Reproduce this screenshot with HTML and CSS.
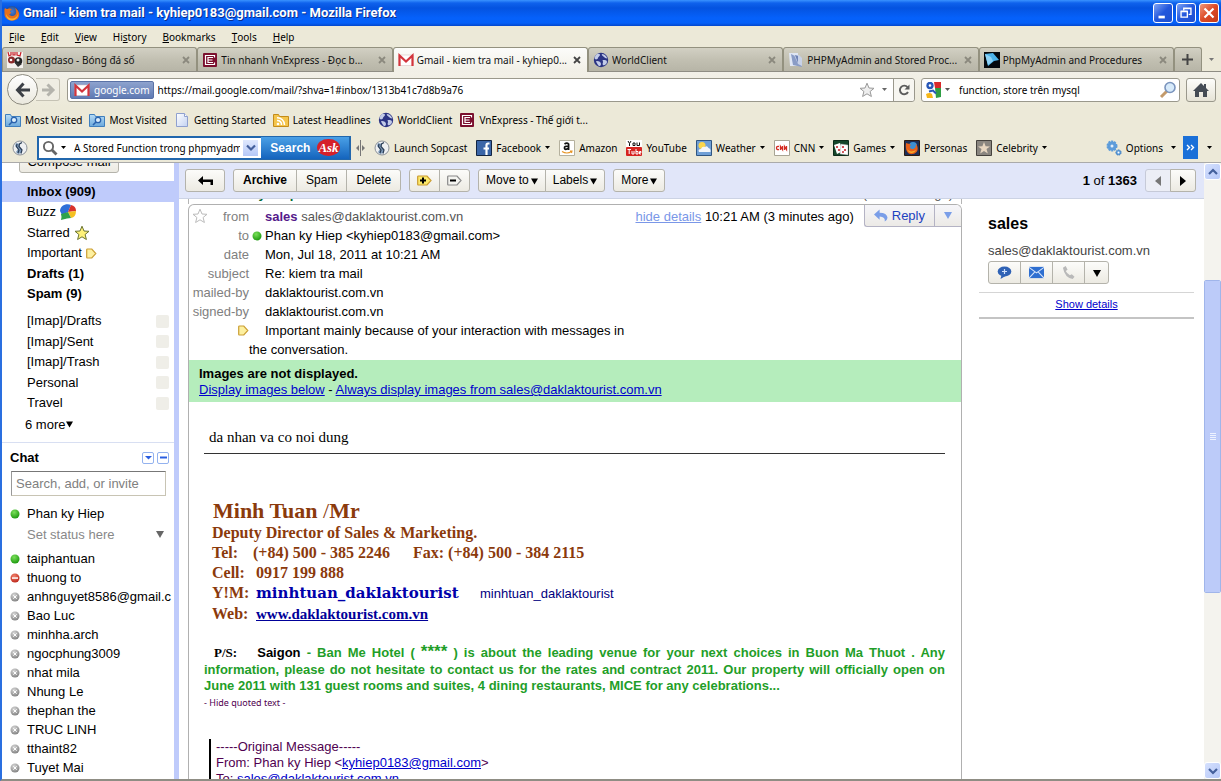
FILE: index.html
```html
<!DOCTYPE html>
<html lang="en">
<head>
<meta charset="utf-8">
<title>Gmail - kiem tra mail</title>
<link rel="stylesheet" href="styles.css">
</head>
<body>
<svg class="defs" aria-hidden="true">
  <defs>
    <linearGradient id="folder" x1="0" y1="0" x2="0" y2="1"><stop offset="0" stop-color="#b8dcf6"/><stop offset="1" stop-color="#6aa8dc"/></linearGradient>
    <linearGradient id="page" x1="0" y1="0" x2="1" y2="1"><stop offset="0" stop-color="#fff"/><stop offset="1" stop-color="#c3d2f2"/></linearGradient>
    <radialGradient id="fox" cx=".5" cy=".4" r=".6"><stop offset="0" stop-color="#4a7fd0"/><stop offset="1" stop-color="#15397e"/></radialGradient>
    <radialGradient id="on" cx=".4" cy=".3" r=".7"><stop offset="0" stop-color="#7be05a"/><stop offset="1" stop-color="#1e9a10"/></radialGradient>
    <radialGradient id="busy" cx=".4" cy=".3" r=".7"><stop offset="0" stop-color="#f0806a"/><stop offset="1" stop-color="#bf2a1e"/></radialGradient>
    <radialGradient id="off" cx=".4" cy=".3" r=".7"><stop offset="0" stop-color="#d8d8d8"/><stop offset="1" stop-color="#858585"/></radialGradient>
  </defs>
  <symbol id="i-firefox" viewBox="0 0 16 16"><circle cx="8" cy="8" r="7" fill="url(#fox)"/><path d="M1 3c1 1 2 1 3 1 2-1 3 0 4 1-2 0-2 1-2 2 2 0 1 2-1 2 1 2 4 3 6 1 2-2 1-5 0-7 3 2 5 5 4 8-1 4-5 5-8 4.500C3 15 0 12 .5 8 .5 6 0 5 1 3z" fill="#e8701a"/><path d="M2 9c1 3 4 5 7 4.500 3-.5 5-3 5-5 .5 4-3 7-6 7-4 0-6-3-6-6.500z" fill="#f9b233"/></symbol>
  <symbol id="i-ball" viewBox="0 0 16 16"><path fill="#f6f2ee" d="M0 0h16v16H0z"/><path d="M1 0l1 4 2-1V0M6 0v3h2V0M10 0v3l3 1 1-4" fill="none" stroke="#c8202a" stroke-width="1.200"/><circle cx="4.500" cy="8" r="3.500" fill="#8c2a2a"/><circle cx="11.500" cy="9" r="3.800" fill="#222"/><path d="M7 10l4 5 4-3" fill="#333"/><circle cx="11" cy="8" r="1.500" fill="#eee"/><circle cx="4" cy="8" r="1.300" fill="#fff"/></symbol>
  <symbol id="i-vne" viewBox="0 0 16 16"><rect x="1" y="1" width="14" height="14" rx="1" fill="#7b0f2e"/><path d="M12.500 5.500v-2h-9v9h9v-2M6 5.500h5M6 8h4.500M6 10.500h5M6 5v6" fill="none" stroke="#fff" stroke-width="1.200"/></symbol>
  <symbol id="i-gmail" viewBox="0 0 16 16"><path d="M1 3h14v10.500H1z" fill="#fff" stroke="#d9c4c4" stroke-width=".6"/><path d="M1.500 14V3.500L8 9.500l6.500-6V14" fill="none" stroke="#d3343c" stroke-width="2.200"/></symbol>
  <symbol id="i-globe" viewBox="0 0 16 16"><circle cx="8" cy="8" r="7.200" fill="#2b3484"/><path d="M3 3c2-2 4-1 4 0S5 5 5 6 3 8 2 7s0-3 1-4zM9 2c3 0 5 3 5 4s-2 0-3-1-3-2-2-3zM4 9c2 0 4 1 4 3s-2 3-3 1-3-4-1-4zM10 8c2 0 4 0 4 2s-3 4-4 3 0-2 0-3-1-2 0-2z" fill="#c2cbe8"/></symbol>
  <symbol id="i-doc2" viewBox="0 0 16 16"><path d="M1 1h9v13H2z" fill="#dfe6f4"/><path d="M3 2l2 11 9 2-3-9z" fill="#8a9cc6"/><path d="M6 3l4 9 4 2V6l-3-3z" fill="#c8d2e8"/><path d="M7 3l3 8V4z" fill="#6f83b6"/></symbol>
  <symbol id="i-fin" viewBox="0 0 16 16"><path fill="#05080d" d="M0 0h16v16H0z"/><path d="M1 2l8-1 6 7-5 1-6 5z" fill="#4db3ea"/><path d="M1 2l6 3 2 4-5 4z" fill="#8fd2f6"/></symbol>
  <symbol id="i-folder" viewBox="0 0 16 16"><path d="M.5 2.500h5l1 2h9v10H.5z" fill="url(#folder)" stroke="#3f7fbe"/><circle cx="9" cy="8" r="2.700" fill="#dceefb" stroke="#2a62ad" stroke-width="1.300"/><path d="M7 10l-3 3" stroke="#2a62ad" stroke-width="1.600"/></symbol>
  <symbol id="i-page" viewBox="0 0 16 16"><path d="M2.500 1.500h8l3 3v10h-11z" fill="url(#page)" stroke="#8fa0cf"/><path d="M10.500 1.500v3h3" fill="#fff" stroke="#8fa0cf"/></symbol>
  <symbol id="i-rssf" viewBox="0 0 16 16"><path d="M.5 2.500h5l1 2h9v10H.5z" fill="#f4c54c" stroke="#c48c1a"/><circle cx="5" cy="12" r="1.300" fill="#fff"/><path d="M4 8.500a4 4 0 0 1 4.500 4.500M4 5.800A7 7 0 0 1 11.500 13" fill="none" stroke="#fff" stroke-width="1.500"/></symbol>
  <symbol id="i-sop" viewBox="0 0 16 16"><circle cx="8" cy="8" r="7" fill="#eef0f2" stroke="#8b9198"/><path d="M4 3l4 1-1 3 3 3-1 3-3 1-2-2 2-3-3-3z" fill="#7f9cbc"/><path d="M10 2.500L7.500 4 7 6.500l3 3.500-1 3.500M5 4l-.5 2.500L7 10l-1 3" fill="none" stroke="#2a3d55" stroke-width="1.200"/></symbol>
  <symbol id="i-fb" viewBox="0 0 16 16"><path d="M.5.5h15v15H.5z" fill="#3b66a8" stroke="#132542"/><path d="M13.500 3.500H12Q10.500 3.500 10.500 5.200V15M7.500 8.500h5.500" fill="none" stroke="#fff" stroke-width="2.200"/></symbol>
  <symbol id="i-amz" viewBox="0 0 16 16"><path d="M.5.5h15v15H.5z" fill="#fff" stroke="#b5b19e"/><path d="M5.500 4Q8 2.200 9.600 4v6M9.500 6Q5 6 5.500 8.300T9.500 8" fill="none" stroke="#111" stroke-width="1.700"/><path d="M3 11.500q5 3 9.500 0M11 11l2 0-.5 2" fill="none" stroke="#e79524" stroke-width="1.100"/></symbol>
  <symbol id="i-yt" viewBox="0 0 16 16"><path fill="#fff" d="M0 0h16v7H0z"/><rect y="7" width="16" height="9" rx="1" fill="#d62320"/><path d="M2 1l1.500 2.500L5 1M3.500 3.500V6M7 3h2v2.500H7zM11 2.500V5.500h2.500v-3" fill="none" stroke="#111"/><path d="M1.500 9.500H5M3.200 9.500V14M6 11v3h2v-3M10 9v5h2v-2.500h-2M15 14h-1.500v-2.500H15v1.200h-1.500" fill="none" stroke="#fff"/></symbol>
  <symbol id="i-wx" viewBox="0 0 16 16"><path d="M.5.5h15v15H.5z" fill="#6f9fd6" stroke="#2f5582"/><circle cx="6" cy="5.500" r="3.500" fill="#fbd64c"/><path d="M3 12q-1.500-3 2-3 1-3 4-2 2-2 3.500 1 2.500.5 2 4z" fill="#f3f6fa"/></symbol>
  <symbol id="i-cnn" viewBox="0 0 16 16"><path d="M.5.5h15v15H.5z" fill="#fff" stroke="#a8a494"/><path d="M5 6.500q-2.500-.5-2.500 1.500T5 9.500M6.500 10V6.500L8.500 9.500V6M10.500 10V6.500L12.500 9.500V6" fill="none" stroke="#d42a20" stroke-width="1.300"/></symbol>
  <symbol id="i-games" viewBox="0 0 16 16"><path d="M.5.5h15v15H.5z" fill="#15462a" stroke="#0b2a18"/><path d="M1 5l6-2 3 8-6 3z" fill="#fff"/><path d="M8 4l7 1v10l-8-1z" fill="#fff" stroke="#999" stroke-width=".4"/><circle cx="4" cy="7" r="1.100" fill="#c1272d"/><circle cx="6" cy="10" r="1.100" fill="#c1272d"/><circle cx="10" cy="7" r="1.100" fill="#c1272d"/><circle cx="12" cy="10" r="1.100" fill="#c1272d"/><circle cx="10" cy="12" r="1" fill="#c1272d"/></symbol>
  <symbol id="i-pers" viewBox="0 0 16 16"><path d="M.5.5h15v15H.5z" fill="#1c2e57" stroke="#2b1a12"/><circle cx="9" cy="6" r="4" fill="#3d8fd2"/><path d="M2 3c2 1 3 0 5 2-2 1-1 4 1 4 3 0 4-2 4-5 3 4 2 9-3 10S1 11 2 3z" fill="#e7601a"/><path d="M3 9c2 3 6 3 9 1-1 3-7 5-9-1z" fill="#f7b02c"/></symbol>
  <symbol id="i-celeb" viewBox="0 0 16 16"><path d="M.5.5h15v15H.5z" fill="#8a8680" stroke="#45423e"/><path d="M8 2l1.600 4.200 4.400.2-3.500 2.700 1.300 4.400L8 11l-3.800 2.500 1.300-4.400L2 6.400l4.400-.2z" fill="#e7d6c0"/></symbol>
  <symbol id="i-gears" viewBox="0 0 16 16"><circle cx="6" cy="6" r="4.600" fill="#5d9cda" stroke="#5d9cda" stroke-width="1.800" stroke-dasharray="2 .9"/><circle cx="6" cy="6" r="4" fill="#5d9cda"/><circle cx="6" cy="6" r="1.500" fill="#e2eefa"/><circle cx="12.500" cy="12.500" r="2.600" fill="#5d9cda" stroke="#3c78b8" stroke-dasharray="1.500 .8"/><circle cx="12.500" cy="12.500" r="1" fill="#fff"/></symbol>
  <symbol id="i-star" viewBox="0 0 16 16"><path d="M8 1.200l2 4.800 5 .3-3.900 3.200 1.300 5L8 11.800l-4.400 2.700 1.300-5L1 6.300 6 6z"/></symbol>
  <symbol id="i-tag" viewBox="0 0 11 11"><path d="M1.500 1h4.300l4 4.500-4 4.500H1.500q-.8 0-.8-.8V1.800q0-.8.8-.8z" fill="#fdf0a0" stroke="#cb9f34" stroke-width="1.200"/></symbol>
  <symbol id="i-on" viewBox="0 0 10 10"><circle cx="5" cy="5" r="4.500" fill="url(#on)"/></symbol>
  <symbol id="i-busy" viewBox="0 0 10 10"><circle cx="5" cy="5" r="4.500" fill="url(#busy)"/><path d="M2 4.300h6v1.500H2z" fill="#fff"/></symbol>
  <symbol id="i-off" viewBox="0 0 10 10"><circle cx="5" cy="5" r="4.500" fill="url(#off)"/><path d="M3.300 3.300l3.400 3.400M6.700 3.300L3.300 6.700" stroke="#fff"/></symbol>
  <symbol id="i-x" viewBox="0 0 8 8"><path d="M1 1l6 6M7 1L1 7" stroke="currentColor" stroke-width="1.800"/></symbol>
  <symbol id="i-down" viewBox="0 0 8 8"><path d="M0 1h8L4 8z" fill="currentColor"/></symbol>
  <symbol id="i-caret" viewBox="0 0 5 3"><path d="M0 0h5L2.500 3z" fill="currentColor"/></symbol>
</svg>

<header class="chrome">
  <div class="titlebar">
    <svg class="i16"><use href="#i-firefox"/></svg>
    <h1>Gmail - kiem tra mail - kyhiep0183@gmail.com - Mozilla Firefox</h1>
    <button class="win" aria-label="Minimize"><svg viewBox="0 0 20 20"><path d="M5 13h7v3H5z" fill="#fff"/></svg></button>
    <button class="win" aria-label="Restore"><svg viewBox="0 0 20 20"><path d="M7.500 7V4.500h8v7H13M4.500 8.500h7v6h-7zM4 8h8M7 5h9" fill="none" stroke="#fff" stroke-width="1.500"/></svg></button>
    <button class="win close" aria-label="Close"><svg viewBox="0 0 20 20"><path d="M5 5l10 10M15 5L5 15" stroke="#fff" stroke-width="2.400"/></svg></button>
  </div>

  <nav class="menubar">
    <button><u>F</u>ile</button><button><u>E</u>dit</button><button><u>V</u>iew</button><button>Hi<u>s</u>tory</button><button><u>B</u>ookmarks</button><button><u>T</u>ools</button><button><u>H</u>elp</button>
  </nav>

  <div class="tabs">
    <div class="tab"><svg class="i16"><use href="#i-ball"/></svg><span>Bongdaso - Bóng đá số</span><button aria-label="Close tab"><svg class="i8"><use href="#i-x"/></svg></button></div>
    <div class="tab"><svg class="i16"><use href="#i-vne"/></svg><span>Tin nhanh VnExpress - Đọc b...</span><button aria-label="Close tab"><svg class="i8"><use href="#i-x"/></svg></button></div>
    <div class="tab active"><svg class="i16"><use href="#i-gmail"/></svg><span>Gmail - kiem tra mail - kyhiep0...</span><button aria-label="Close tab"><svg class="i8"><use href="#i-x"/></svg></button></div>
    <div class="tab"><svg class="i16"><use href="#i-globe"/></svg><span>WorldClient</span><button aria-label="Close tab"><svg class="i8"><use href="#i-x"/></svg></button></div>
    <div class="tab"><svg class="i16"><use href="#i-doc2"/></svg><span>PHPMyAdmin and Stored Proc...</span><button aria-label="Close tab"><svg class="i8"><use href="#i-x"/></svg></button></div>
    <div class="tab"><svg class="i16"><use href="#i-fin"/></svg><span>PhpMyAdmin and Procedures</span><button aria-label="Close tab"><svg class="i8"><use href="#i-x"/></svg></button></div>
    <button class="newtab" aria-label="New tab"><svg viewBox="0 0 11 11"><path d="M5.500 0v11M0 5.500h11" stroke="#444" stroke-width="2"/></svg></button>
    <button class="alltabs" aria-label="List all tabs"><svg class="caret"><use href="#i-caret"/></svg></button>
  </div>

  <div class="navbar">
    <button class="back" aria-label="Back"><svg viewBox="0 0 16 16"><path d="M8.500 1.500L2.500 8l6 6.500M3 8h12" fill="none" stroke="#3c4046" stroke-width="3"/></svg></button>
    <button class="forward" aria-label="Forward"><svg viewBox="0 0 16 16"><path d="M7.500 2.500L13 8l-5.500 5.500M13 8H2" fill="none" stroke="#b4b3ac" stroke-width="3"/></svg></button>
    <div class="urlbar">
      <button class="identity"><svg class="i16"><use href="#i-gmail"/></svg>google.com</button>
      <input type="text" aria-label="Address" value="https://mail.google.com/mail/?shva=1#inbox/1313b41c7d8b9a76">
      <button class="plain" aria-label="Bookmark this page"><svg class="i16 urlstar"><use href="#i-star"/></svg></button>
      <button class="plain drop" aria-label="History list"><svg class="caret"><use href="#i-caret"/></svg></button>
      <button class="reload" aria-label="Reload"><svg viewBox="0 0 12 12"><path d="M9.500 3.200A4.300 4.300 0 1 0 10 8" fill="none" stroke="#5c5c5c" stroke-width="1.900"/><path d="M6.500 5.500H11.500V.5z" fill="#5c5c5c"/></svg></button>
    </div>
    <div class="searchbar">
      <button class="plain engine" aria-label="Search engine"><svg class="i16" viewBox="0 0 16 16"><path fill="#fff" d="M0 0h16v16H0z"/><path d="M9 0h7v6H10z" fill="#d9292b"/><path d="M10 6h6v9l-5 1z" fill="#2f9e44"/><path d="M1 12q4-2 6 0l1 4H2z" fill="#f6b719"/><circle cx="5" cy="3.500" r="2.500" fill="none" stroke="#2858b8" stroke-width="2.400"/><path d="M4 9.500l4-1 3 3" stroke="#2858b8" stroke-width="2" fill="none"/></svg><svg class="caret"><use href="#i-caret"/></svg></button>
      <input type="text" aria-label="Search the web" value="function, store trên mysql">
      <button class="plain" aria-label="Search"><svg class="i18" viewBox="0 0 18 18"><path d="M8 10l-6 6" stroke="#c39a6b" stroke-width="3"/><circle cx="11" cy="6.500" r="5" fill="#d7eafa" stroke="#7a94bd" stroke-width="1.600"/></svg></button>
    </div>
    <button class="home" aria-label="Home"><svg class="i16" viewBox="0 0 16 16"><path d="M8 1L0 9h2v6h4v-5h4v5h4V9h2l-3-3V2h-2v2z" fill="#444b54"/></svg></button>
  </div>

  <div class="bookmarks">
    <a href="#"><svg class="i16"><use href="#i-folder"/></svg>Most Visited</a>
    <a href="#"><svg class="i16"><use href="#i-folder"/></svg>Most Visited</a>
    <a href="#"><svg class="i16"><use href="#i-page"/></svg>Getting Started</a>
    <a href="#"><svg class="i16"><use href="#i-rssf"/></svg>Latest Headlines</a>
    <a href="#"><svg class="i16"><use href="#i-globe"/></svg>WorldClient</a>
    <a href="#"><svg class="i16"><use href="#i-vne"/></svg>VnExpress - Thế giới t...</a>
  </div>

  <div class="askbar">
    <svg class="i16"><use href="#i-sop"/></svg>
    <form class="ask">
      <svg class="i16" viewBox="0 0 16 16"><circle cx="6.500" cy="6.500" r="4.600" fill="#fff" stroke="#666" stroke-width="1.900"/><path d="M10 10l4.500 4.500" stroke="#666" stroke-width="2.800"/></svg>
      <svg class="caret"><use href="#i-caret"/></svg>
      <input type="text" aria-label="Ask search" value="A Stored Function trong phpmyadm">
      <button type="button" class="askdrop" aria-label="Recent searches"><svg viewBox="0 0 10 8"><path d="M1 1.500l4 4 4-4" fill="none" stroke="#44609c" stroke-width="2.200"/></svg></button>
      <button type="button" class="askgo">Search<span class="asklogo">Ask</span></button>
    </form>
    <svg class="grip" viewBox="0 0 9 16"><path d="M4.500 0v16" stroke="#777"/><path d="M0 8l3-3v6zM9 8L6 5v6z" fill="#777"/></svg>
    <div class="links">
      <a href="#"><svg class="i16"><use href="#i-sop"/></svg>Launch Sopcast</a>
      <a href="#"><svg class="i16"><use href="#i-fb"/></svg>Facebook<svg class="caret"><use href="#i-caret"/></svg></a>
      <a href="#"><svg class="i16"><use href="#i-amz"/></svg>Amazon</a>
      <a href="#"><svg class="i16"><use href="#i-yt"/></svg>YouTube</a>
      <a href="#"><svg class="i16"><use href="#i-wx"/></svg>Weather<svg class="caret"><use href="#i-caret"/></svg></a>
      <a href="#"><svg class="i16"><use href="#i-cnn"/></svg>CNN<svg class="caret"><use href="#i-caret"/></svg></a>
      <a href="#"><svg class="i16"><use href="#i-games"/></svg>Games<svg class="caret"><use href="#i-caret"/></svg></a>
      <a href="#"><svg class="i16"><use href="#i-pers"/></svg>Personas</a>
      <a href="#"><svg class="i16"><use href="#i-celeb"/></svg>Celebrity<svg class="caret"><use href="#i-caret"/></svg></a>
    </div>
    <a class="options" href="#"><svg class="i16"><use href="#i-gears"/></svg>Options<svg class="caret"><use href="#i-caret"/></svg></a>
    <button class="more" aria-label="More tools"><svg viewBox="0 0 9 7"><path d="M1 1l2.500 2.500L1 6M5 1l2.500 2.500L5 6" fill="none" stroke="#fff" stroke-width="1.400"/></svg></button>
    <svg class="caret"><use href="#i-caret"/></svg>
  </div>
</header>

<div class="view">
  <aside class="sidebar">
    <button class="btn compose">Compose mail</button>
    <ul class="folders">
      <li class="current"><a href="#">Inbox (909)</a></li>
      <li><a href="#">Buzz</a><svg class="i16" viewBox="0 0 16 16"><path d="M0 7C0 2 6-1 11 1L8 8l-6 3z" fill="#2f6fd8"/><path d="M11 1q5 1 5 6L8 8z" fill="#d8322c"/><path d="M16 7q0 6-5 7L8 8z" fill="#f5c021"/><path d="M1 10l7-2 3 6-4 .5L1 16q1-3 0-6z" fill="#2fa24a"/></svg></li>
      <li><a href="#">Starred</a><svg class="i16 gold"><use href="#i-star"/></svg></li>
      <li><a href="#">Important</a><svg class="i11"><use href="#i-tag"/></svg></li>
      <li><a href="#"><b>Drafts (1)</b></a></li>
      <li><a href="#"><b>Spam (9)</b></a></li>
    </ul>
    <ul class="labels">
      <li><a href="#">[Imap]/Drafts</a><i></i></li>
      <li><a href="#">[Imap]/Sent</a><i></i></li>
      <li><a href="#">[Imap]/Trash</a><i></i></li>
      <li><a href="#">Personal</a><i></i></li>
      <li><a href="#">Travel</a><i></i></li>
    </ul>
    <button class="morelabels">6 more<svg class="i7"><use href="#i-down"/></svg></button>
    <section class="chat">
      <div class="chathead"><h2>Chat</h2>
        <button aria-label="Chat options"><svg viewBox="0 0 7 7"><path d="M0 2h7L3.500 5.500z" fill="#2a5ee0"/></svg></button>
        <button aria-label="Collapse chat"><svg viewBox="0 0 7 7"><path d="M0 2.500h7v2H0z" fill="#2a5ee0"/></svg></button>
      </div>
      <input class="chatsearch" type="text" aria-label="Search, add, or invite" placeholder="Search, add, or invite">
      <div class="me"><svg class="i10"><use href="#i-on"/></svg>Phan ky Hiep</div>
      <div class="status"><span>Set status here</span><svg class="i8"><use href="#i-down"/></svg></div>
      <ul class="contacts">
        <li><svg class="i10"><use href="#i-on"/></svg>taiphantuan</li>
        <li><svg class="i10"><use href="#i-busy"/></svg>thuong to</li>
        <li><svg class="i10"><use href="#i-off"/></svg>anhnguyet8586@gmail.c</li>
        <li><svg class="i10"><use href="#i-off"/></svg>Bao Luc</li>
        <li><svg class="i10"><use href="#i-off"/></svg>minhha.arch</li>
        <li><svg class="i10"><use href="#i-off"/></svg>ngocphung3009</li>
        <li><svg class="i10"><use href="#i-off"/></svg>nhat mila</li>
        <li><svg class="i10"><use href="#i-off"/></svg>Nhung Le</li>
        <li><svg class="i10"><use href="#i-off"/></svg>thephan the</li>
        <li><svg class="i10"><use href="#i-off"/></svg>TRUC LINH</li>
        <li><svg class="i10"><use href="#i-off"/></svg>tthaint82</li>
        <li><svg class="i10"><use href="#i-off"/></svg>Tuyet Mai</li>
      </ul>
    </section>
  </aside>

  <main class="main">
    <div class="toolbar">
      <div class="group"><button class="btn backlist" aria-label="Back to Inbox"><svg viewBox="0 0 15 10"><path d="M0 4.500L5 0v3.500h10V9h-2.500V6H5v3z" fill="#000"/></svg></button></div>
      <div class="group"><button class="btn"><b>Archive</b></button><button class="btn">Spam</button><button class="btn">Delete</button></div>
      <div class="group"><button class="btn mark" aria-label="Mark as important"><svg viewBox="0 0 15 11"><path d="M1.500 1h8.500l4 4.500-4 4.500H1.500q-.8 0-.8-.8V1.800q0-.8.8-.8z" fill="#fdea6a" stroke="#c99a2e" stroke-width="1.200"/><path d="M6 2.500v6M3 5.500h6" stroke="#000" stroke-width="2"/></svg></button><button class="btn mark" aria-label="Mark as not important"><svg viewBox="0 0 15 11"><path d="M1.500 1h8.500l4 4.500-4 4.500H1.500q-.8 0-.8-.8V1.800q0-.8.8-.8z" fill="#f4f4f0" stroke="#888" stroke-width="1.200"/><path d="M3 5.500h6" stroke="#000" stroke-width="2"/></svg></button></div>
      <div class="group menus"><button class="btn">Move to<svg class="i7"><use href="#i-down"/></svg></button><button class="btn">Labels<svg class="i7"><use href="#i-down"/></svg></button></div>
      <div class="group menus"><button class="btn">More<svg class="i7"><use href="#i-down"/></svg></button></div>
      <span class="count"><b>1</b> of <b>1363</b></span>
      <div class="group pager"><button class="btn off" aria-label="Newer"><svg viewBox="0 0 6 10"><path d="M6 0v10L0 5z" fill="#777"/></svg></button><button class="btn" aria-label="Older"><svg viewBox="0 0 6 10"><path d="M0 0v10l6-5z" fill="#000"/></svg></button></div>
    </div>

    <div class="columns">
      <article class="thread">
        <div class="prev"><b>Phan ky Hiep</b><span>(6 minutes ago)</span></div>
        <div class="card">
          <div class="head">
            <svg class="i16 unstarred"><use href="#i-star"/></svg>
            <dl class="details">
              <dt>from</dt><dd><b class="sender">sales</b> <span class="addr">sales@daklaktourist.com.vn</span></dd>
              <dt class="online">to<svg class="i10"><use href="#i-on"/></svg></dt><dd>Phan ky Hiep &lt;kyhiep0183@gmail.com&gt;</dd>
              <dt>date</dt><dd>Mon, Jul 18, 2011 at 10:21 AM</dd>
              <dt>subject</dt><dd>Re: kiem tra mail</dd>
              <dt>mailed-by</dt><dd>daklaktourist.com.vn</dd>
              <dt>signed-by</dt><dd>daklaktourist.com.vn</dd>
              <dt class="tagged"><svg class="i11"><use href="#i-tag"/></svg></dt><dd class="why">Important mainly because of your interaction with messages in<br>the conversation.</dd>
            </dl>
            <div class="when"><a href="#">hide details</a> 10:21 AM (3 minutes ago)</div>
            <div class="reply"><button><svg viewBox="0 0 15 13"><path d="M0 5.500L6 0v3.500q8 0 8.500 5.500-.5 3-3 4 1-5-5.500-5.500V11z" fill="#7a9ee8"/></svg>Reply</button><button aria-label="More reply options"><svg class="i8"><use href="#i-down"/></svg></button></div>
          </div>
          <div class="images"><b>Images are not displayed.</b><br><a href="#">Display images below</a> - <a href="#">Always display images from sales@daklaktourist.com.vn</a></div>
          <div class="body">
            <p class="note">da nhan va co noi dung</p>
            <hr>
            <div class="sign">
              <div class="name">Minh Tuan <span>/</span>Mr</div>
              <div class="role">Deputy Director of Sales &amp; Marketing.</div>
              <div class="line"><span class="key">Tel:</span><span class="tel">(+84) 500 - 385 2246</span><span>Fax: (+84) 500 - 384 2115</span></div>
              <div class="line"><span class="key">Cell:</span>0917 199 888</div>
              <div class="line"><span class="key">Y!M:</span><span class="ym">minhtuan_daklaktourist</span><span class="ymid">minhtuan_daklaktourist</span></div>
              <div class="line"><span class="key">Web:</span><a href="#">www.daklaktourist.com.vn</a></div>
            </div>
            <p class="ps"><span class="just first"><span class="black ind">P/S:</span> <span class="black sgn">Saigon</span> - Ban Me Hotel ( <span class="stars">****</span> ) is about the leading venue for your next choices in Buon Ma Thuot . Any</span><span class="just">information, please do not hesitate to contact us for the rates and contract 2011. Our property will officially open on</span><span class="just last">June 2011 with 131 guest rooms and suites, 4 dining restaurants, MICE for any celebrations...</span></p>
            <button class="quoted">- Hide quoted text -</button>
            <blockquote>-----Original Message-----<br>From: Phan ky Hiep &lt;<a href="#">kyhiep0183@gmail.com</a>&gt;<br>To: <a href="#">sales@daklaktourist.com.vn</a></blockquote>
          </div>
        </div>
      </article>
      <aside class="people">
        <h2>sales</h2>
        <p>sales@daklaktourist.com.vn</p>
        <div class="group contact">
          <button class="btn" aria-label="Chat"><svg viewBox="0 0 14 13"><ellipse cx="7" cy="5.500" rx="6.800" ry="5" fill="#2f62b5"/><path d="M4 9l-1 4 5-3z" fill="#2f62b5"/><path d="M7 3v5M4.500 5.500h5" stroke="#cfe0fa" stroke-width="1.200"/></svg></button>
          <button class="btn" aria-label="Email"><svg viewBox="0 0 16 12"><path d="M0 0h16v12H0z" fill="#2f6fd0"/><path d="M0 .5l8 6 8-6M0 12l6-6.500M16 12l-6-6.500" fill="none" stroke="#d6e5fb" stroke-width="1.100"/></svg></button>
          <button class="btn" aria-label="Call"><svg viewBox="0 0 14 14"><path d="M1 2l3-2 2 4-2 1.500q1.500 3 4.500 4.500L10.500 9l3 2.500-2 2.500Q3 13 1 2z" fill="#b9b9b9"/></svg></button>
          <button class="btn" aria-label="More"><svg class="i8"><use href="#i-down"/></svg></button>
        </div>
        <div class="show"><a href="#">Show details</a></div>
      </aside>
    </div>
  </main>

  <div class="scroll" aria-hidden="true">
    <div class="arrow"><svg viewBox="0 0 10 8"><path d="M1 6l4-4 4 4" fill="none" stroke="#44609c" stroke-width="2.200"/></svg></div>
    <div class="track"><div class="thumb"><svg viewBox="0 0 6 8"><path d="M0 .5h6M0 2.500h6M0 4.500h6M0 6.500h6" stroke="#eef3ff"/></svg></div></div>
    <div class="arrow"><svg viewBox="0 0 10 8"><path d="M1 2l4 4 4-4" fill="none" stroke="#44609c" stroke-width="2.200"/></svg></div>
  </div>
</div>
</body>
</html>
```

FILE: styles.css
```css
* { box-sizing: border-box; }

body {
  margin: 0;
  height: 100vh;
  display: flex;
  flex-direction: column;
  overflow: hidden;
  border-left: 2px solid #2a6fe0;
  border-bottom: 2px solid #8f8d84;
  background: #fff;
  color: #000;
  font: 13px/19px "Liberation Sans", Arial, sans-serif;
  white-space: nowrap;
}

button, input { font: inherit; color: inherit; }
button { margin: 0; padding: 0; border: 0; background: none; display: flex; align-items: center; justify-content: center; white-space: nowrap; }
ul, dl, dd, p, h1, h2, blockquote { margin: 0; padding: 0; list-style: none; }
svg { flex: none; display: block; }
a { color: inherit; text-decoration: none; }

.defs { position: absolute; width: 0; height: 0; }
.i7 { width: 7px; height: 8px; }
.i8 { width: 8px; height: 8px; }
.i10 { width: 10px; height: 10px; }
.i11 { width: 11px; height: 11px; }
.i16 { width: 16px; height: 16px; }
.i18 { width: 18px; height: 18px; }
.caret { width: 5px; height: 3px; }

/* browser chrome */
.chrome { flex: none; background: #ece9d8; font: 10px/16px "Noto Sans", Tahoma, sans-serif; border-bottom: 1px solid #aaa; }

.titlebar {
  height: 26px;
  margin-left: -2px;
  padding: 0 2px 0 4px;
  display: flex;
  align-items: center;
  gap: 3px;
  background: linear-gradient(#3a93ff 0, #0f62ec 3px, #0453e0 8px, #0561fb 18px, #0560f8 23px, #0447cc 26px);
}
.titlebar h1 { flex: 1; color: #fff; font: bold 13px/18px Roboto, "Trebuchet MS", sans-serif; text-shadow: 1px 1px #0a2d8c; }
.win { width: 20px; height: 20px; border: 1px solid #fff; border-radius: 3px; background: linear-gradient(135deg, #7fa4f5, #2257dc 50%, #1d4fd0); }
.win.close { background: linear-gradient(135deg, #f0987c, #dc4a26 50%, #c23a18); }
.win svg { width: 18px; height: 18px; }

.menubar { height: 21px; padding-left: 7px; display: flex; align-items: center; gap: 16px; }
.menubar u { text-underline-offset: 1px; }

.tabs { display: flex; height: 25px; border-bottom: 1px solid #8f8d84; }
.tab, .newtab {
  border: 1px solid #93917f;
  border-bottom: 0;
  border-radius: 3px 3px 0 0;
  background: linear-gradient(#d2d0c3, #c2c0b2 50%, #b7b5a7);
}
.tab { flex: 1 1 0; min-width: 0; display: flex; align-items: center; gap: 3px; padding: 0 6px 0 4px; color: #111; }
.tab span { flex: 1; overflow: hidden; }
.tab button { color: #8b897e; }
.tab.active { background: linear-gradient(#fcfcfa, #f1efe6); margin-bottom: -1px; }
.tab.active button { color: #444; }
.newtab { width: 28px; }
.newtab svg { width: 11px; height: 11px; }
.alltabs { width: 19px; color: #777; }

.navbar { height: 35px; padding: 0 5px; display: flex; align-items: center; background: linear-gradient(#f2f0e8, #ece9d8); }
.back { width: 31px; height: 31px; border: 1px solid #8d8b80; border-radius: 50%; background: linear-gradient(#fff, #eae8de); z-index: 1; }
.back svg, .forward svg { width: 16px; height: 16px; }
.forward { width: 24px; height: 23px; margin: 0 7px 0 -2px; border: 1px solid #c5c2b4; border-left: 0; border-radius: 0 3px 3px 0; background: #efede3; }
.urlbar, .searchbar { height: 24px; display: flex; align-items: center; background: #fff; border: 1px solid #9a988c; border-radius: 3px; }
.urlbar { flex: 1; padding-left: 2px; }
.urlbar input, .searchbar input { flex: 1; min-width: 0; border: 0; background: none; padding: 0; outline: 0; }
.identity { height: 18px; padding: 0 3px; margin-right: 4px; gap: 4px; border-radius: 2px; color: #fff; background: linear-gradient(#8ea3ce, #5f7ab4); border: 1px solid #5a72a6; }
.urlstar { fill: #eee; stroke: #999; }
.drop { width: 18px; color: #666; }
.reload { width: 21px; height: 22px; border-left: 1px solid #9a988c; background: #f7f6f1; border-radius: 0 3px 3px 0; }
.reload svg { width: 12px; height: 12px; }
.searchbar { width: 259px; margin: 0 6px; padding: 0 2px 0 3px; }
.engine { gap: 4px; margin-right: 9px; color: #555; }
.home { width: 30px; height: 24px; border: 1px solid #9a988c; border-radius: 3px; background: linear-gradient(#fdfdfb, #e6e3d6); }

.bookmarks { height: 26px; padding-left: 3px; display: flex; align-items: center; gap: 7px; }
.bookmarks a, .links a, .options { display: flex; align-items: center; gap: 4px; }

.askbar { height: 29px; padding-left: 10px; display: flex; align-items: center; }
.ask { margin: 0 5px 0 9px; width: 314px; height: 24px; border: 2px solid #2167ad; background: #fff; display: flex; align-items: center; padding-left: 3px; gap: 3px; }
.ask input { flex: 1; min-width: 0; border: 0; padding: 0 0 0 5px; outline: 0; background: none; }
.askdrop { width: 15px; height: 16px; background: linear-gradient(#dfe8fd, #b5c8f7); }
.askdrop svg, .arrow svg { width: 10px; height: 8px; }
.askgo { width: 88px; height: 22px; gap: 7px; color: #fff; font: bold 12px/18px "Liberation Sans", Arial, sans-serif; background: linear-gradient(#4aa0e6, #1464bd); }
.asklogo { padding: 0 1px; border-radius: 50%; background: #d5202a; font: italic bold 13px/17px "Liberation Serif", serif; }
.grip { width: 9px; height: 16px; margin-right: 9px; }
.links { display: flex; flex: 1; gap: 9px; }
.options { margin-right: 7px; }
.options .caret { margin-left: 4px; }
.more { width: 15px; height: 23px; margin-right: 9px; background: #1a70d8; }
.more svg { width: 9px; height: 7px; }
.askbar > .caret { margin-right: 9px; }

/* mail window */
.view { flex: 1; min-height: 0; display: flex; }
.sidebar { width: 177px; flex: none; border-right: 5px solid #bfcbfb; overflow: hidden; }

.btn {
  height: 23px;
  padding: 0 9px;
  gap: 3px;
  border: 1px solid #b4b3ab;
  background: linear-gradient(#fcfcfa, #eceae2);
}
.group { display: flex; }
.group .btn + .btn { margin-left: -1px; }
.group .btn:first-child, .compose { border-top-left-radius: 3px; border-bottom-left-radius: 3px; }
.group .btn:last-child, .compose { border-top-right-radius: 3px; border-bottom-right-radius: 3px; }

.compose { width: 100px; margin: -13px 0 8px 17px; }
.folders li, .labels li { height: 20px; line-height: 20px; padding: 0 5px 0 25px; display: flex; align-items: center; gap: 4px; }
.folders li:nth-child(odd), .labels li:nth-child(even) { height: 21px; }
.folders .current { background: #bfcbfb; font-weight: bold; }
.gold { fill: #fff27a; stroke: #6b7430; }
.labels { padding-top: 7px; }
.labels a { flex: 1; }
.labels i { width: 13px; height: 13px; border-radius: 2px; background: #efeee8; }
.morelabels { margin-left: 23px; height: 22px; gap: 1px; }
.chat { margin-top: 7px; border-top: 1px solid #d8dff2; padding: 4px 0 0 8px; }
.chathead { height: 21px; display: flex; align-items: center; gap: 3px; padding-right: 5px; }
.chathead h2 { flex: 1; font-size: 13px; }
.chathead button { width: 12px; height: 12px; border: 1px solid #93b2ef; border-radius: 2px; background: #fff; }
.chathead svg { width: 7px; height: 7px; }
.chatsearch { display: block; width: 155px; height: 25px; margin: 3px 0 8px 1px; padding: 0 4px; border: 1px solid #c8c4b4; border-top-color: #777; border-left-color: #999; background: #fff; }
.chatsearch::placeholder { color: #808080; opacity: 1; }
.me, .contacts li { height: 19px; display: flex; align-items: center; gap: 7px; }
.contacts { overflow: hidden; width: 164px; }
.status { height: 20px; display: flex; align-items: center; justify-content: space-between; padding: 2px 10px 0 17px; color: #888; margin-bottom: 6px; }
.status svg { color: #666; }

.main { flex: 1; min-width: 0; display: flex; flex-direction: column; }
.toolbar { flex: none; height: 36px; padding: 0 8px 0 6px; display: flex; align-items: center; gap: 8px; background: #e1e6f9; border-bottom: 1px solid #ccd3e4; }
.toolbar .btn { font-size: 12px; }
.toolbar .menus .btn { padding: 0 7px; gap: 2px; }
.backlist { width: 40px; }
.backlist svg { width: 15px; height: 10px; }
.mark svg { width: 15px; height: 11px; }
.toolbar .mark { padding: 0 7px; }
.count { margin-left: auto; }
.toolbar .pager .btn { width: 26px; padding: 0; }
.pager .off { background: #eceef6; border-color: #c6cad8; }
.pager svg { width: 6px; height: 10px; }

.columns { flex: 1; min-height: 0; display: flex; }
.thread { flex: 1; min-width: 0; margin-left: 9px; display: flex; flex-direction: column; }
.prev { flex: none; height: 5px; padding: 0 8px 0 27px; border: solid #b5b5b5; border-width: 0 1px; display: flex; align-items: flex-end; justify-content: space-between; line-height: 20px; overflow: hidden; color: #555; }
.prev b { color: #006633; }
.card { flex: 1; min-height: 0; overflow: hidden; border: 1px solid #b0b0b0; border-bottom: 0; border-radius: 6px 6px 0 0; }
.head { display: flex; align-items: flex-start; padding-top: 2px; }
.unstarred { margin: 1px 0 0 3px; fill: #fff; stroke: #bbb; }
.details { flex: 1; display: grid; grid-template-columns: 41px 1fr; column-gap: 16px; }
.details dt { color: #808080; display: flex; align-items: center; justify-content: flex-end; }
.details .online { margin-right: -13px; gap: 3px; }
.details .tagged { align-items: flex-start; padding-top: 4px; }
.details .why { margin-left: -16px; text-indent: 16px; }
.sender { color: #551a8b; }
.addr { color: #555; }
.when a { color: #7a97e8; text-decoration: underline; }
.when { margin-right: 10px; }
.reply { display: flex; margin-top: -3px; }
.reply button { height: 23px; padding: 0 9px; gap: 4px; border: solid #b4b3c4; border-width: 0 0 1px 1px; background: linear-gradient(#f6f6fb, #eceae6); color: #1c42c0; }
.reply button:first-child { border-radius: 0 0 0 3px; }
.reply button svg { width: 14px; height: 13px; color: #7a9ee8; }
.reply button .i8 { width: 8px; height: 8px; }
.images { padding: 6px 10px 4px; line-height: 16px; background: #b5edbc; margin-top: 1px; }
.images a, blockquote a { color: #0000cc; text-decoration: underline; }

.body { padding: 26px 16px 0 15px; }
.note { padding-left: 5px; font: 15px/18px "Liberation Serif", serif; }
hr { margin: 7px 0 45px; border: 0; border-top: 1px solid #333; }
.sign { padding-left: 8px; color: #8b3a0c; font: bold 16px/20px "Liberation Serif", serif; }
.name { font-size: 22px; line-height: 24px; padding-left: 1px; }
.name span { font-weight: normal; }
.line { display: flex; align-items: baseline; }
.key { width: 44px; }
.tel { width: 160px; }
.key + .tel { margin-left: -3px; }
.ym { width: 224px; color: #0000aa; font: bold 15px/20px "DejaVu Serif", serif; }
.ymid { color: #000080; font: 13px/20px "Liberation Sans", sans-serif; }
.line a { color: #000099; font-size: 15px; text-decoration: underline; }
.ps { margin-top: 20px; color: #1f9e28; font: bold 13px/16px "Liberation Sans", sans-serif; }
.just { display: block; text-align-last: justify; }
.first { padding-bottom: 1px; }
.last { text-align-last: left; }
.black { color: #000; }
.ind { margin-left: 10px; font-family: "Liberation Serif", serif; }
.sgn { margin-left: 14px; }
.stars { font-size: 17px; line-height: 16px; }
.quoted { color: #500050; font: 9px/16px "Noto Sans", sans-serif; margin-top: 1px; }
blockquote { margin: 28px 0 0 5px; padding-left: 5px; border-left: 2px solid #000; line-height: 16px; color: #500050; }

.people { width: 242px; flex: none; padding: 15px 10px 0 17px; }
.people h2 { padding-left: 9px; font-size: 16px; line-height: 20px; }
.people p { padding: 7px 0 1px 9px; color: #444; }
.contact { padding-left: 9px; }
.contact .btn { width: 33px; padding: 0; }
.contact .btn:last-child { width: 25px; }
.contact svg { width: 15px; height: 13px; }
.contact .i8 { width: 8px; height: 8px; }
.show { margin-top: 8px; height: 27px; border-top: 1px solid #d5d5d5; border-bottom: 2px solid #c4c4c4; text-align: center; font-size: 11px; line-height: 23px; }
.show a { color: #0000cc; text-decoration: underline; }

.scroll { width: 17px; flex: none; display: flex; flex-direction: column; background: #f4f3ee; }
.arrow { flex: none; height: 17px; display: flex; align-items: center; justify-content: center; border: 1px solid #fff; border-radius: 3px; background: linear-gradient(135deg, #d5e0fd, #b6c8f8); }
.track { flex: 1; display: flex; flex-direction: column; padding-top: 100px; }
.thumb { height: 65%; display: flex; align-items: center; justify-content: center; border: 1px solid #fff; outline: 1px solid #a0b5ea; outline-offset: -1px; border-radius: 2px; background: #bccbf9; }
.thumb svg { width: 6px; height: 8px; }
```
